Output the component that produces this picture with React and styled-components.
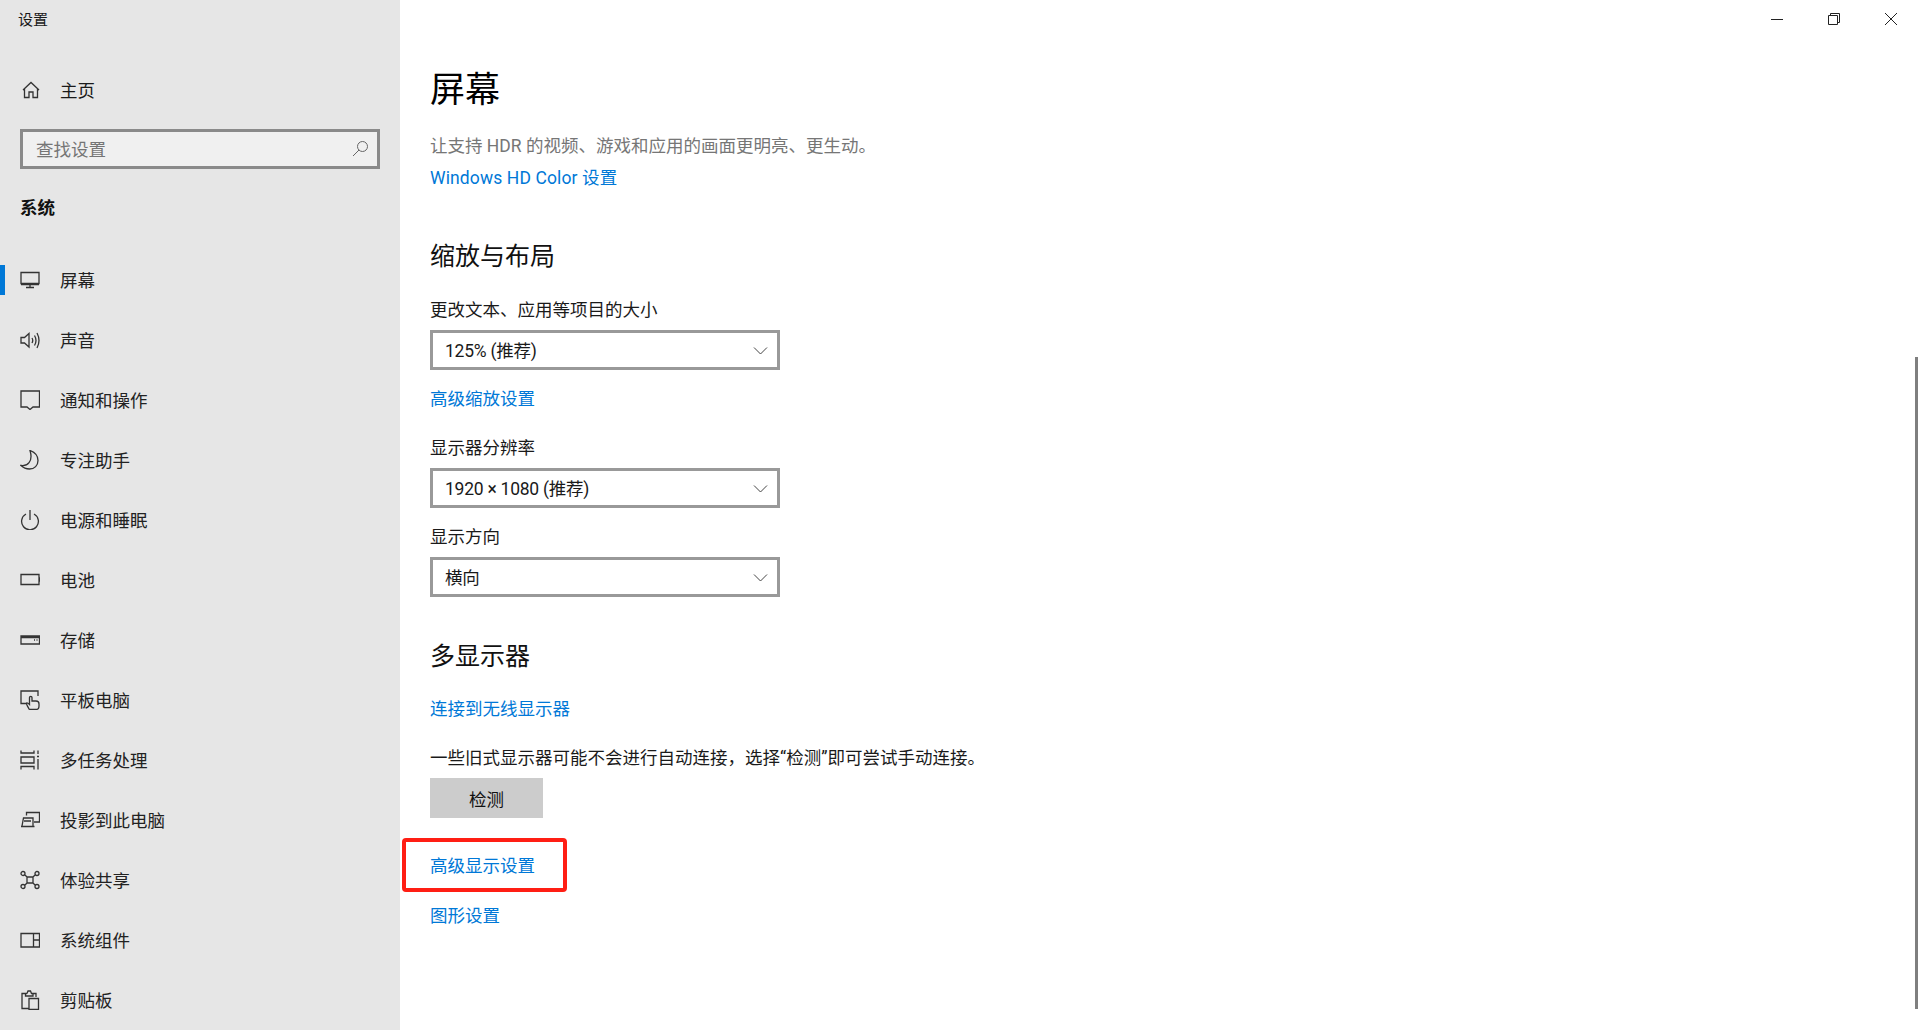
import React from 'react';
import styled, { createGlobalStyle } from 'styled-components';

const Global = createGlobalStyle`
  html, body {
    margin: 0;
    height: 100%;
    overflow: hidden;
    background: #fff;
  }
  body {
    font-family: Roboto, "Noto Sans CJK SC", sans-serif;
    color: #1a1a1a;
  }
`;

const Window = styled.div`
  position: relative;
  display: flex;
  width: 1920px;
  height: 1030px;
  overflow: hidden;
`;

const Sidebar = styled.aside`
  flex: 0 0 400px;
  display: flex;
  flex-direction: column;
  background: #e6e6e6;
`;

const AppTitle = styled.div`
  height: 38px;
  padding-left: 18px;
  font-size: 15px;
  line-height: 40px;
`;

const Label = styled.span`
  padding-bottom: 2px;
`;

const HomeRow = styled.div`
  display: flex;
  align-items: center;
  height: 60px;
  margin-top: 22px;
  padding-left: 20px;
  font-size: 17.5px;
`;

const SearchBox = styled.div`
  display: flex;
  align-items: center;
  justify-content: space-between;
  box-sizing: border-box;
  width: 360px;
  height: 40px;
  margin: 9px 0 0 20px;
  padding: 0 8px 0 13px;
  background: #f0f0f0;
  border: 3px solid #8a8a8a;
  color: #757575;
  font-size: 17.5px;
`;

const GroupTitle = styled.div`
  height: 24px;
  margin: 27px 0 0 20px;
  font-size: 17.5px;
  line-height: 24px;
  font-weight: 700;
  color: #111;
`;

const NavList = styled.nav`
  display: flex;
  flex-direction: column;
  margin-top: 30px;
`;

const NavItem = styled.div`
  position: relative;
  display: flex;
  align-items: center;
  flex: 0 0 60px;
  padding-left: 20px;
  font-size: 17.5px;
  color: #222;

  &::before {
    content: '';
    display: ${p => (p.$active ? 'block' : 'none')};
    position: absolute;
    left: 0;
    top: 15px;
    width: 5px;
    height: 30px;
    background: #0078d7;
  }
`;

const IconSlot = styled.svg`
  flex: 0 0 20px;
  width: 20px;
  height: 20px;
  margin-right: 20px;
  fill: none;
  stroke: #333;
  stroke-width: 1.3;
`;

const Main = styled.main`
  flex: 1;
  display: flex;
  flex-direction: column;
  align-items: flex-start;
  padding: 65px 0 0 30px;
`;

const PageTitle = styled.h1`
  margin: 0;
  height: 48px;
  font-size: 35px;
  line-height: 52px;
  font-weight: 400;
  color: #000;
`;

const SectionTitle = styled.h2`
  margin: ${p => p.$top}px 0 0;
  height: 34px;
  font-size: 25px;
  line-height: 36px;
  font-weight: 400;
  color: #111;
`;

const Text = styled.div`
  height: 24px;
  margin-top: ${p => p.$top}px;
  font-size: 17.5px;
  line-height: 26px;
  color: ${p => (p.$muted ? '#767676' : '#1a1a1a')};
`;

const TextLink = styled.a`
  display: block;
  height: 24px;
  margin-top: ${p => p.$top || 0}px;
  font-size: 17.5px;
  line-height: 26px;
  letter-spacing: ${p => p.$track || 0}px;
  color: #0078d7;
`;

const Select = styled.div`
  display: flex;
  align-items: center;
  justify-content: space-between;
  box-sizing: border-box;
  width: 350px;
  height: 40px;
  margin-top: 9px;
  padding: 0 9px 0 12px;
  border: 3px solid #999;
  font-size: 17.5px;
  letter-spacing: -0.25px;
  color: #1a1a1a;
`;

const Chevron = styled.svg`
  width: 15px;
  height: 15px;
  fill: none;
  stroke: #444;
  stroke-width: 1;
`;

const Button = styled.div`
  display: flex;
  align-items: center;
  justify-content: center;
  width: 113px;
  height: 40px;
  margin-top: 9px;
  background: #ccc;
  font-size: 17.5px;
  color: #111;
`;

const Highlight = styled.div`
  display: flex;
  align-items: center;
  box-sizing: border-box;
  width: 165px;
  height: 54px;
  margin: 20px 0 0 -28px;
  padding-left: 24px;
  border: 4px solid #ff1e14;
  border-radius: 4px;
`;

const WindowControls = styled.div`
  position: absolute;
  top: 0;
  right: 1px;
  display: flex;
`;

const ControlButton = styled.div`
  display: flex;
  align-items: center;
  justify-content: center;
  width: 57px;
  height: 38px;
`;

const ControlIcon = styled.svg`
  width: 14px;
  height: 14px;
  fill: none;
  stroke: #222;
  stroke-width: 1;
`;

const ScrollThumb = styled.div`
  position: absolute;
  right: 2px;
  top: 357px;
  width: 3px;
  height: 652px;
  background: #7f7f7f;
`;

const icons = {
  home: <path d="M3 10 L11 2.5 L19 10 M4.5 9 V17.5 H9 V12 H13 V17.5 H17.5 V9" />,
  display: <path d="M1 2.5 H19 V13.5 H1 Z M1 14.5 H19 M10 14.5 V17 M6 17.5 H14" />,
  sound: <path d="M1 7.5 H4.5 L9 3.5 V17 L4.5 13 H1 Z M12 8 Q13.5 10.5 12 13 M14.5 5.5 Q17.5 10.5 14.5 15.5 M17 3 Q21 10.5 17 18" />,
  notify: <path d="M1 1 H19.5 V17 H13 L10 19.5 L7 17 H1 Z" />,
  moon: <path d="M10 0.5 C14 2 18 5 18 10.5 C18 15.5 14.5 19 9.5 19 C6 19 3 17.5 1 15.5 C7 16.5 13.5 12 10 0.5 Z" />,
  power: <path d="M6 4 A8.4 8.4 0 1 0 14 4 M10 0 V10" />,
  battery: <path d="M1 4.5 H19 V14.5 H1 Z M19 8 H20 V11 H19" />,
  storage: <path d="M1 6 H19.5 V14 H1 Z M1 7.5 H19.5 M14 10 H15 M16.5 10 H17.5" />,
  tablet: <path d="M7 13.5 H1 V1 H18 V6 M9 19 C7 15 6 14 6.5 13 C7.5 12.5 9 14 9.5 14.5 V7.5 C9.5 6 12 6 12 7.5 V11 H16 C18 11 19 12 19 14 V16 C19 18 18 19.5 16 19.5 H11 C10 19.5 9.5 19.5 9 19 Z" />,
  multitask: <path d="M1 0.5 V3 H14 V0.5 M1 7 H14 V13 H1 Z M1 19.5 V16.5 H14 V19.5 M18 0.5 V4 M18 9 V19.5 M17 6.5 H19" />,
  project: <path d="M6.5 5.5 V2.5 H19.5 V12 H14 M2 16 L3.5 8 H13 V16 M1 16.5 H14.5 M4 11 H11" />,
  share: <path d="M7 7 L5 5 M13 7 L15 5 M7 13 L5 15 M13 13 L15 15 M7 7 H13 V13 H7 Z M5 3.5 A2 2 0 1 1 1 3.5 A2 2 0 1 1 5 3.5 M19 3.5 A2 2 0 1 1 15 3.5 A2 2 0 1 1 19 3.5 M5 16.5 A2 2 0 1 1 1 16.5 A2 2 0 1 1 5 16.5 M19 16.5 A2 2 0 1 1 15 16.5 A2 2 0 1 1 19 16.5" />,
  components: <path d="M1 3.5 H19.5 V17 H1 Z M13.5 3.5 V17 M13.5 10 H19.5" />,
  clipboard: <path d="M7 3.5 H2 V18.5 H9 M7 3.5 L8 1 H10.5 L11.5 3.5 H16 V7 M5.5 3.5 V6 H13 V3.5 M9 8.5 H18.5 V19.5 H9 Z" />,
};

const navItems = [
  ['display', '屏幕'],
  ['sound', '声音'],
  ['notify', '通知和操作'],
  ['moon', '专注助手'],
  ['power', '电源和睡眠'],
  ['battery', '电池'],
  ['storage', '存储'],
  ['tablet', '平板电脑'],
  ['multitask', '多任务处理'],
  ['project', '投影到此电脑'],
  ['share', '体验共享'],
  ['components', '系统组件'],
  ['clipboard', '剪贴板'],
];

const Icon = ({ name }) => <IconSlot viewBox="0 0 20 20">{icons[name]}</IconSlot>;

const Dropdown = ({ children }) => (
  <Select>
    <Label>{children}</Label>
    <Chevron viewBox="0 0 15 15"><path d="M1 4.5 L7.5 11 L14 4.5" /></Chevron>
  </Select>
);

export default function App() {
  return (
    <Window>
      <Global />
      <Sidebar>
        <AppTitle>设置</AppTitle>
        <HomeRow><Icon name="home" /><Label>主页</Label></HomeRow>
        <SearchBox>
          <Label>查找设置</Label>
          <svg width="18" height="18" viewBox="0 0 18 18" fill="none" stroke="#666" strokeWidth="1">
            <circle cx="11.5" cy="6.5" r="5" />
            <path d="M8 10 L2 16" />
          </svg>
        </SearchBox>
        <GroupTitle>系统</GroupTitle>
        <NavList>
          {navItems.map(([icon, label], i) => (
            <NavItem key={label} $active={i === 0}>
              <Icon name={icon} />
              <Label>{label}</Label>
            </NavItem>
          ))}
        </NavList>
      </Sidebar>

      <Main>
        <PageTitle>屏幕</PageTitle>
        <Text $top={20} $muted>让支持 HDR 的视频、游戏和应用的画面更明亮、更生动。</Text>
        <TextLink $top={8} $track={0.12}>Windows HD Color 设置</TextLink>

        <SectionTitle $top={50}>缩放与布局</SectionTitle>
        <Text $top={24}>更改文本、应用等项目的大小</Text>
        <Dropdown>125% (推荐)</Dropdown>
        <TextLink $top={16}>高级缩放设置</TextLink>
        <Text $top={25}>显示器分辨率</Text>
        <Dropdown>1920 × 1080 (推荐)</Dropdown>
        <Text $top={16}>显示方向</Text>
        <Dropdown>横向</Dropdown>

        <SectionTitle $top={42}>多显示器</SectionTitle>
        <TextLink $top={23}>连接到无线显示器</TextLink>
        <Text $top={25}>一些旧式显示器可能不会进行自动连接，选择“检测”即可尝试手动连接。</Text>
        <Button>检测</Button>
        <Highlight><TextLink>高级显示设置</TextLink></Highlight>
        <TextLink $top={11}>图形设置</TextLink>
      </Main>

      <WindowControls>
        <ControlButton>
          <ControlIcon viewBox="0 0 14 14"><path d="M1 7.5 H13" /></ControlIcon>
        </ControlButton>
        <ControlButton>
          <ControlIcon viewBox="0 0 14 14"><path d="M1.5 3.5 H10.5 V12.5 H1.5 Z M3.5 3.5 V1.5 H12.5 V10.5 H10.5" /></ControlIcon>
        </ControlButton>
        <ControlButton>
          <ControlIcon viewBox="0 0 14 14"><path d="M1 1 L13 13 M13 1 L1 13" /></ControlIcon>
        </ControlButton>
      </WindowControls>
      <ScrollThumb />
    </Window>
  );
}
